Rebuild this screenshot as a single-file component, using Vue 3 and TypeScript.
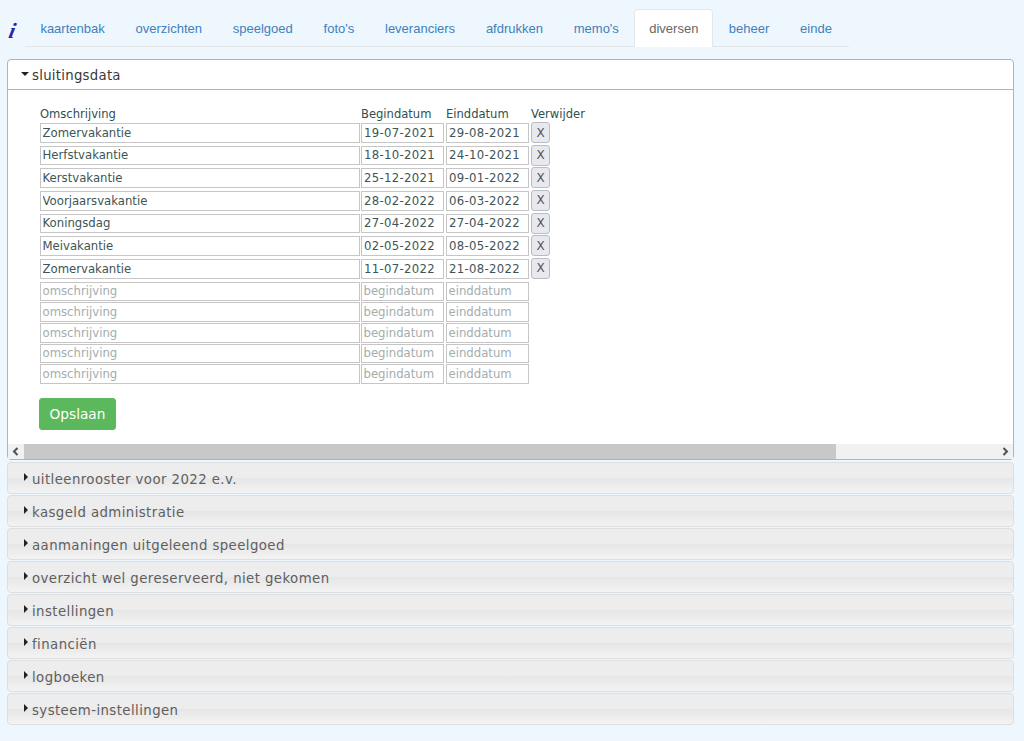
<template>
  <div class="page">
    <nav class="nav">
      <span class="logo">i</span>
      <ul class="tabs">
        <li v-for="t in tabs" :key="t" :class="{ active: t === 'diversen' }"><a href="#">{{ t }}</a></li>
      </ul>
    </nav>

    <section class="panel open">
      <h3 class="head"><span class="caret down"></span>sluitingsdata</h3>
      <div class="body">
        <div class="content">
          <div class="labels">
            <span class="c1">Omschrijving</span>
            <span class="c2">Begindatum</span>
            <span class="c2">Einddatum</span>
            <span>Verwijder</span>
          </div>
          <div v-for="(r, i) in rows" :key="i" class="row">
            <input class="c1" :value="r[0]" />
            <input class="c2 date" :value="r[1]" />
            <input class="c2 date" :value="r[2]" />
            <button class="del">X</button>
          </div>
          <div v-for="n in 5" :key="n" class="row empty">
            <input class="c1" placeholder="omschrijving" />
            <input class="c2" placeholder="begindatum" />
            <input class="c2" placeholder="einddatum" />
          </div>
          <button class="save">Opslaan</button>
        </div>
        <div class="scrollbar">
          <span class="arrow"><svg width="8" height="9" viewBox="0 0 8 9"><path d="M5.5 1 2 4.5 5.5 8" fill="none" stroke="#505050" stroke-width="2" /></svg></span>
          <span class="thumb"></span>
          <span class="track"></span>
          <span class="arrow"><svg width="8" height="9" viewBox="0 0 8 9"><path d="M2.5 1 6 4.5 2.5 8" fill="none" stroke="#505050" stroke-width="2" /></svg></span>
        </div>
      </div>
    </section>

    <section v-for="s in sections" :key="s" class="panel closed">
      <h3 class="head"><span class="caret right"></span>{{ s }}</h3>
    </section>
  </div>
</template>

<script setup lang="ts">
const tabs = ['kaartenbak', 'overzichten', 'speelgoed', "foto's", 'leveranciers', 'afdrukken', "memo's", 'diversen', 'beheer', 'einde']

const rows: [string, string, string][] = [
  ['Zomervakantie', '19-07-2021', '29-08-2021'],
  ['Herfstvakantie', '18-10-2021', '24-10-2021'],
  ['Kerstvakantie', '25-12-2021', '09-01-2022'],
  ['Voorjaarsvakantie', '28-02-2022', '06-03-2022'],
  ['Koningsdag', '27-04-2022', '27-04-2022'],
  ['Meivakantie', '02-05-2022', '08-05-2022'],
  ['Zomervakantie', '11-07-2022', '21-08-2022'],
]

const sections = [
  'uitleenrooster voor 2022 e.v.',
  'kasgeld administratie',
  'aanmaningen uitgeleend speelgoed',
  'overzicht wel gereserveerd, niet gekomen',
  'instellingen',
  'financiën',
  'logboeken',
  'systeem-instellingen',
]
</script>

<style>
html, body { background: #eef6fe; }
</style>

<style scoped>
.page { height: 741px; box-sizing: border-box; padding: 9px 10px 0 7px; overflow: hidden; font-family: "DejaVu Sans", sans-serif; }
.nav { display: flex; height: 38px; margin-bottom: 12px; }
.logo { width: 18px; padding-top: 12px; text-align: center; font: italic 22px/20px "Liberation Serif", serif; font-weight: 700; color: #2a1fb0; transform: translateX(-3px) skewX(-12deg); }
.tabs { display: flex; list-style: none; margin: 0; padding: 0 2px 0 0; border-bottom: 1px solid #e3e7ea; height: 37px; }
.tabs li { height: 38px; box-sizing: border-box; }
.tabs a { display: block; padding: 0 15.4px; font: 13px/39px "Liberation Sans", sans-serif; color: #4081bd; text-decoration: none; }
.tabs li.active { background: #fff; border: 1px solid #e3e7ea; border-bottom: none; border-radius: 4px 4px 0 0; }
.tabs li.active a { color: #666; padding: 0 14px; line-height: 38px; }

.panel { border-radius: 4px; box-sizing: border-box; }
.head { margin: 0; display: flex; align-items: center; font-size: 13.3px; font-weight: 400; }
.caret { width: 0; height: 0; }
.caret.down { margin: 0 3px 3px 13px; border-left: 4px solid transparent; border-right: 4px solid transparent; border-top: 4px solid #222; }
.caret.right { margin: 0 4px 4px 16px; border-top: 4px solid transparent; border-bottom: 4px solid transparent; border-left: 4px solid #222; }

.open { border: 1px solid #aeb4ba; background: #fff; margin-bottom: 2px; }
.open .head { height: 30px; padding-top: 1px; box-sizing: border-box; border-bottom: 1px solid #aeb4ba; color: #3a3a3a; letter-spacing: .26px; }

.closed { height: 32px; margin-bottom: 1px; border: 1px solid #dcdfe1; background: linear-gradient(#ededed 0 50%, #e6e6e6 50%, #f3f3f3 100%); }
.closed .head { height: 30px; padding-top: 2px; box-sizing: border-box; color: #5f5f5f; letter-spacing: .42px; }

.content { height: 354px; box-sizing: border-box; padding: 16px 0 0 32px; }
.labels { display: flex; gap: 2px; height: 17px; font-size: 11.55px; line-height: 16px; color: #2f4f4f; }
.c1 { width: 319.5px; flex: none; margin-right: -.5px; }
.c2 { width: 83px; flex: none; }
.row { display: flex; gap: 2px; height: 22.67px; }
.row.empty { height: 20.67px; }
.row.empty:nth-last-child(2) { height: 20px; }
input { box-sizing: border-box; height: 19.67px; margin: 0; padding: 0 1.5px; border: 1px solid #c6c6c6; border-radius: 0; background: #fff; font: 11.7px "DejaVu Sans", sans-serif; color: #3d5555; outline: none; }
input.date { letter-spacing: .3px; padding-left: 2px; }
input::placeholder { color: #a3adad; opacity: 1; }
.del { width: 19px; height: 21px; margin-top: -1px; padding: 0; border: 1px solid #b9bcc4; border-radius: 3px; background: #e8e9ee; font: 12px "DejaVu Sans", sans-serif; color: #555; }
.save { display: block; margin: 14px 0 0 -1px; width: 77px; height: 32px; padding: 0; border: 1px solid #5cb85c; border-radius: 3px; background: #5cb85c; color: #fff; font: 13.7px "DejaVu Sans", sans-serif; }

.scrollbar { display: flex; height: 15px; background: #f1f1f1; }
.arrow { width: 16px; flex: none; display: flex; align-items: center; justify-content: center; }
.thumb { width: 812px; background: #c8c8c8; }
.track { flex: 1; }
</style>
